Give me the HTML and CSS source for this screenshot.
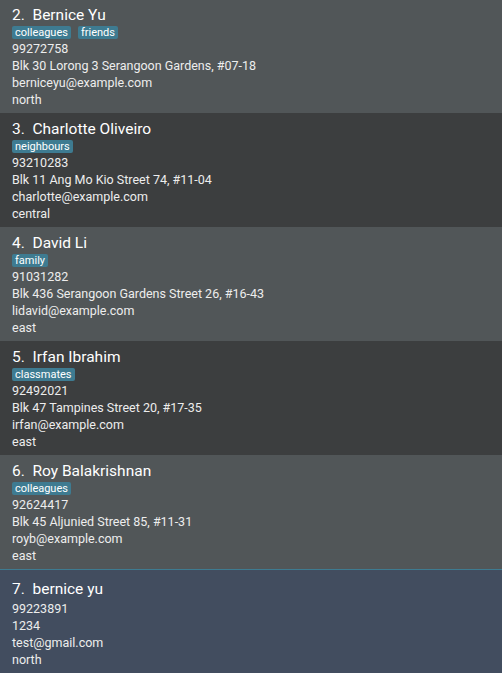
FILE: index.html
```html
<!DOCTYPE html>
<html>
<head>
<meta charset="utf-8">
<link rel="stylesheet" href="styles.css">
</head>
<body>
<div class="list">
  <div class="card light">
    <div class="name">2.&nbsp; Bernice Yu</div>
    <div class="tags"><span class="tag">colleagues</span><span class="tag">friends</span></div>
    <div class="line">99272758</div>
    <div class="line">Blk 30 Lorong 3 Serangoon Gardens, #07-18</div>
    <div class="line">berniceyu@example.com</div>
    <div class="line">north</div>
  </div>
  <div class="card dark">
    <div class="name">3.&nbsp; Charlotte Oliveiro</div>
    <div class="tags"><span class="tag">neighbours</span></div>
    <div class="line">93210283</div>
    <div class="line">Blk 11 Ang Mo Kio Street 74, #11-04</div>
    <div class="line">charlotte@example.com</div>
    <div class="line">central</div>
  </div>
  <div class="card light">
    <div class="name">4.&nbsp; David Li</div>
    <div class="tags"><span class="tag">family</span></div>
    <div class="line">91031282</div>
    <div class="line">Blk 436 Serangoon Gardens Street 26, #16-43</div>
    <div class="line">lidavid@example.com</div>
    <div class="line">east</div>
  </div>
  <div class="card dark">
    <div class="name">5.&nbsp; Irfan Ibrahim</div>
    <div class="tags"><span class="tag">classmates</span></div>
    <div class="line">92492021</div>
    <div class="line">Blk 47 Tampines Street 20, #17-35</div>
    <div class="line">irfan@example.com</div>
    <div class="line">east</div>
  </div>
  <div class="card light">
    <div class="name">6.&nbsp; Roy Balakrishnan</div>
    <div class="tags"><span class="tag">colleagues</span></div>
    <div class="line">92624417</div>
    <div class="line">Blk 45 Aljunied Street 85, #11-31</div>
    <div class="line">royb@example.com</div>
    <div class="line">east</div>
  </div>
  <div class="card selected">
    <div class="name">7.&nbsp; bernice yu</div>
    <div class="line">99223891</div>
    <div class="line">1234</div>
    <div class="line">test@gmail.com</div>
    <div class="line">north</div>
  </div>
</div>
</body>
</html>
```
FILE: styles.css
```css
html, body {
  margin: 0;
  padding: 0;
  height: 673px;
  overflow: hidden;
  background: #424d5f;
}
body {
  font-family: Roboto, "Liberation Sans", sans-serif;
  color: #ffffff;
}
.list {
  margin-top: -1px;
  display: flex;
  flex-direction: column;
}
.card {
  height: 114px;
  box-sizing: border-box;
  padding: 5px 12px 0;
  flex-shrink: 0;
}
.light { background: #515658; }
.dark { background: #3c3e3f; }
.selected {
  background: #424d5f;
  border-top: 1px solid #3e7b91;
  padding-top: 8px;
}
.name {
  font-size: 15.5px;
  line-height: 22px;
  color: #ffffff;
}
.tags {
  display: flex;
  gap: 7px;
  margin-bottom: 1px;
}
.tag {
  background: #3e7b91;
  color: #ffffff;
  font-size: 11px;
  line-height: 13px;
  padding: 0 3px;
  border-radius: 2px;
}
.line {
  font-size: 12.5px;
  line-height: 17px;
  color: #ededed;
}
```
